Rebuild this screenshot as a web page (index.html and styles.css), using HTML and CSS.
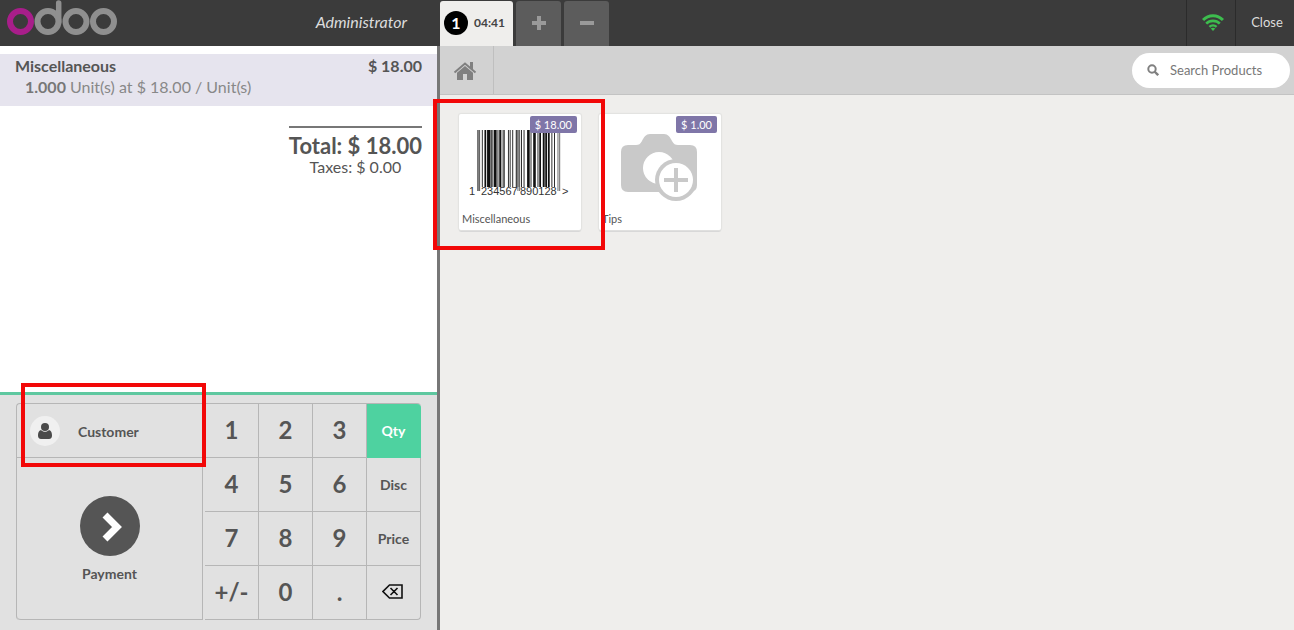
FILE: index.html
```html
<!DOCTYPE html>
<html lang="en">
<head>
<meta charset="utf-8">
<title>Odoo Point of Sale</title>
<link rel="stylesheet" href="styles.css">
</head>
<body>
<div class="pos">
  <header class="topbar">
    <div class="branding">
      <svg class="logo" viewBox="0 0 110 36" role="img" aria-label="odoo" fill="none" stroke-width="6">
        <circle cx="13.500" cy="21.500" r="10.500" stroke="#a81e8a"/>
        <g stroke="#8f8f8f">
          <circle cx="41" cy="21.500" r="10.500"/>
          <path d="M51.700 22V3" stroke-linecap="round" stroke-width="5.500"/>
          <circle cx="69" cy="21.500" r="10.500"/>
          <circle cx="96.500" cy="21.500" r="10.500"/>
        </g>
      </svg>
      <span class="username">Administrator</span>
    </div>
    <nav class="tabs">
      <button class="tab active"><span class="badge">1</span><span>04:41</span></button>
      <button class="tab" aria-label="New order"><svg width="16" height="16" viewBox="0 0 16 16"><path d="M6 0h4v5h5v4h-5v5H6V9H1V5h5z" fill="#9a9a9a"/></svg></button>
      <button class="tab" aria-label="Delete order"><svg width="16" height="16" viewBox="0 0 16 16"><path d="M1 5h14v4H1z" fill="#9a9a9a"/></svg></button>
    </nav>
    <div class="status">
      <button class="status-item wifi" aria-label="Connection status">
        <svg width="22" height="17" viewBox="0 0 22 17" fill="none" stroke="#3dbd4e" stroke-width="3">
          <path d="M1 6C6.500.200 15.500.200 21 6"/>
          <path d="M4.200 9.700C8 5.900 14 5.900 17.800 9.700" stroke-width="2.600"/>
          <path d="M7.400 12.900C9.500 11 12.500 11 14.600 12.900" stroke-width="2.400"/>
          <path d="M11 17l-2.300-2.400q2.300-1.700 4.600 0z" fill="#3dbd4e" stroke="none"/>
        </svg>
      </button>
      <button class="status-item close">Close</button>
    </div>
  </header>

  <div class="content">
    <section class="leftpane">
      <div class="order">
        <div class="orderline">
          <div class="line-main"><span>Miscellaneous</span><span>$ 18.00</span></div>
          <div class="line-info"><b>1.000</b> Unit(s) at $ 18.00 / Unit(s)</div>
        </div>
        <div class="summary">
          <div class="total">Total: $ 18.00</div>
          <div class="taxes">Taxes: $ 0.00</div>
        </div>
      </div>
      <div class="pads">
        <div class="keypad">
          <button class="customer">
            <span class="avatar"><svg width="14" height="16" viewBox="0 0 14 16" fill="#4a4a4a"><circle cx="7" cy="4" r="4"/><path d="M3 7c2 2.400 6 2.400 8 0 2.300.400 3 3 3 5.500 0 2.200-1 3.500-3 3.500H3c-2 0-3-1.300-3-3.500C0 10 .700 7.400 3 7z"/></svg></span>
            <span>Customer</span>
          </button>
          <button class="key">1</button><button class="key">2</button><button class="key">3</button><button class="mode selected">Qty</button>
          <button class="payment">
            <span class="pay-circle"><svg width="20" height="30" viewBox="0 0 20 30"><path d="M3 3l12 12L3 27" fill="none" stroke="#fff" stroke-width="7"/></svg></span>
            <span>Payment</span>
          </button>
          <button class="key">4</button><button class="key">5</button><button class="key">6</button><button class="mode">Disc</button>
          <button class="key">7</button><button class="key">8</button><button class="key">9</button><button class="mode">Price</button>
          <button class="key">+/-</button><button class="key">0</button><button class="key">.</button>
          <button class="mode last" aria-label="Backspace"><svg width="21" height="15" viewBox="0 0 21 15" fill="none" stroke="#111" stroke-width="1.600"><path d="M7.500 1H20v13H7.500L1 7.500zM8.500 4l7 7M15.500 4l-7 7"/></svg></button>
        </div>
      </div>
    </section>

    <section class="rightpane">
      <div class="catbar">
        <button class="home" aria-label="Home"><svg width="24" height="20" viewBox="0 0 24 20" fill="#808080"><path d="M12 6l8 6.800V20h-6v-6h-4v6H4v-7.200z"/><path d="M1.500 12.500L12 3.500l10.500 9" fill="none" stroke="#808080" stroke-width="2"/><path d="M17 2h3v8l-3-2.500z"/></svg></button>
        <label class="search">
          <svg width="12" height="12" viewBox="0 0 12 12" fill="none" stroke="#808080" stroke-width="2"><circle cx="5" cy="5" r="3.700"/><path d="M7.500 7.500L11.200 11.200" stroke-width="2.400"/></svg>
          <input type="text" placeholder="Search Products" aria-label="Search Products">
        </label>
      </div>
      <div class="products">
        <article class="product">
          <svg class="picture" viewBox="0 0 122 90" role="img" aria-label="Barcode">
            <path d="M18 16h3v61h-3z" fill="#999"/>
            <path d="M32 16h3v57h-3zM42 16h4v57h-4zM57 16h4v57h-4zM84 16h3v57h-3z" fill="#aaa"/>
            <g transform="translate(18.500 16) scale(.870 1)" fill="#111">
              <path d="M0 0h1v61H0zM2 0h1v61H2zM46 0h1v61h-1zM48 0h1v61h-1zM92 0h1v61h-1zM94 0h1v61h-1z" fill="#555"/>
              <path d="M5 0h1v57H5zM8 0h2v57H8zM11 0h4v57h-4zM16 0h1v57h-1zM19 0h3v57h-3zM23 0h1v57h-1zM25 0h2v57h-2zM30 0h1v57h-1zM35 0h1v57h-1zM37 0h1v57h-1zM40 0h1v57h-1zM44 0h1v57h-1zM50 0h1v57h-1zM53 0h1v57h-1zM57 0h3v57h-3zM61 0h1v57h-1zM64 0h3v57h-3zM69 0h1v57h-1zM71 0h2v57h-2zM75 0h2v57h-2zM78 0h2v57h-2zM81 0h2v57h-2zM85 0h1v57h-1zM88 0h1v57h-1z"/>
            </g>
            <g class="digits"><text x="10" y="81">1</text><text x="22" y="81">234567</text><text x="61" y="81">890128</text><text x="103" y="81">&gt;</text></g>
          </svg>
          <span class="price">$ 18.00</span>
          <span class="name">Miscellaneous</span>
        </article>
        <article class="product">
          <svg class="picture" viewBox="0 0 122 90" role="img" aria-label="No picture">
            <path d="M29 31h8c3 0 4-1 6-4 2-4 4-7 8-7h14c4 0 6 3 8 7 2 3 3 4 6 4h12q7 0 7 7v33q0 7-7 7H29q-7 0-7-7V38q0-7 7-7z" fill="#c9c9c9"/>
            <circle cx="60" cy="54" r="16" fill="#fff"/>
            <circle cx="77" cy="66" r="21" fill="#c9c9c9"/>
            <circle cx="77" cy="66" r="17" fill="#fff"/>
            <path d="M65 66h24M77 54v24" stroke="#c9c9c9" stroke-width="4"/>
          </svg>
          <span class="price">$ 1.00</span>
          <span class="name">Tips</span>
        </article>
      </div>
    </section>
  </div>
  <div class="highlight highlight-product"></div>
  <div class="highlight highlight-customer"></div>
</div>
</body>
</html>
```
FILE: styles.css
```css
* { box-sizing: border-box; }
body { margin: 0; font-family: Lato, "Liberation Sans", sans-serif; color: #555; }
button { margin: 0; padding: 0; border: 0; background: none; font: inherit; color: inherit; cursor: pointer; }
svg { display: block; flex: none; }

.pos { position: relative; display: flex; flex-direction: column; height: 100vh; overflow: hidden; background: #efeeec; }

.topbar { display: flex; flex: none; height: 46px; background: #3b3b3b; color: #ddd; }
.branding { display: flex; flex: 0 0 440px; align-items: flex-start; justify-content: space-between; padding: 0 33px 0 7px; }
.logo { width: 110px; height: 36px; }
.username { font-size: 16px; font-style: italic; line-height: 44px; }
.tabs { display: flex; flex: 1; gap: 3px; padding-top: 1px; }
.tab { display: flex; align-items: center; justify-content: center; width: 45px; border-radius: 3px 3px 0 0; background: #5c5c5c; }
.tab.active { justify-content: flex-start; width: 73px; gap: 6px; padding: 0 0 2px 4px; background: #efeeec; color: #444; font-size: 12px; font-weight: 700; }
.badge { width: 24px; height: 24px; border-radius: 50%; background: #000; color: #fff; font-size: 16px; line-height: 24px; }
.status { display: flex; }
.status-item { display: flex; align-items: center; justify-content: center; border-left: 1px solid #2b2b2b; font-size: 13px; }
.wifi { width: 49px; padding: 0 0 2px 4px; }
.close { width: 59px; padding: 0 0 2px 4px; }

.content { display: flex; flex: 1; min-height: 0; }
.leftpane { display: flex; flex: 0 0 440px; flex-direction: column; border-right: 3px solid #777; background: #fff; }
.order { flex: 1; padding-top: 8px; }
.orderline { padding: 1px 15px; height: 52px; background: #e6e4ee; font-size: 16px; line-height: 21px; }
.line-main { display: flex; justify-content: space-between; font-weight: 700; }
.line-info { padding-left: 10px; color: #888; }
.line-info b { color: #777; }
.summary { width: fit-content; margin: 20px 15px 0 auto; padding-top: 6px; border-top: 2px solid #777; text-align: center; }
.total { font-size: 22px; font-weight: 700; line-height: 24px; }
.taxes { font-size: 16px; line-height: 18px; }

.pads { padding: 8px 16px 10px; border-top: 3px solid #5ec8a0; background: #e1e1e1; }
.keypad { display: grid; grid-template-columns: 188px repeat(4, 54px); grid-auto-rows: 54px; width: fit-content; border: solid #b6b6b6; border-width: 1px 0 0 1px; border-radius: 4px; }
.keypad button { border: solid #b6b6b6; border-width: 0 1px 1px 0; font-weight: 700; }
.keypad .customer { display: flex; align-items: center; gap: 18px; padding: 1px 0 0 13px; border-right: 0; font-size: 14px; }
.avatar { display: flex; align-items: center; justify-content: center; width: 30px; height: 30px; border-radius: 50%; background: #f0f0f0; }
.keypad .payment { display: flex; grid-row: 2 / 5; grid-column: 1; flex-direction: column; align-items: center; justify-content: center; gap: 9px; margin-right: 2px; padding-top: 2px; border-bottom-left-radius: 4px; font-size: 14px; line-height: 18px; }
.pay-circle { display: flex; align-items: center; justify-content: center; width: 60px; height: 60px; padding: 2px 0 0 4px; border-radius: 50%; background: #555; }
.keypad .key { padding-bottom: 2px; font-size: 24px; }
.mode { display: flex; align-items: center; justify-content: center; font-size: 14px; }
.keypad .mode.selected { border-color: #4ed2a0; border-top-right-radius: 4px; background: #4ed2a0; color: #fff; }
.keypad .last { padding: 0 2px 2px 0; border-bottom-right-radius: 4px; }

.rightpane { flex: 1; min-width: 0; }
.catbar { display: flex; align-items: center; justify-content: space-between; height: 49px; padding-right: 4px; border-bottom: 1px solid #c3c3c3; background: #d2d2d2; }
.home { display: flex; align-items: center; justify-content: center; align-self: stretch; width: 54px; padding-right: 3px; border-right: 1px solid #bfbfbf; }
.search { display: flex; align-items: center; gap: 11px; width: 158px; height: 35px; padding: 0 15px; border-radius: 18px; background: #fff; }
.search input { flex: 1; min-width: 0; padding: 0; border: 0; outline: 0; background: none; color: #666; font: 13px Lato, "Liberation Sans", sans-serif; }
.search input::placeholder { color: #777; opacity: 1; }

.products { display: flex; flex-wrap: wrap; gap: 18px; padding: 19px; }
.product { position: relative; display: flex; flex-direction: column; justify-content: space-between; width: 122px; height: 116px; border-radius: 2px; background: #fff; box-shadow: 0 0 1px 1px #e2e2e0, 0 2px 0 #d8d8d8; }
.picture { width: 122px; height: 90px; }
.digits { font: 11px "Liberation Sans", sans-serif; fill: #333; }
.price { position: absolute; top: 2px; right: 4px; padding: 0 5px; border-radius: 2px; background: #7f76a8; color: #fff; font-size: 11px; line-height: 17px; }
.name { padding: 0 3px 3px; font-size: 11px; line-height: 16px; }

.highlight { position: absolute; border: 4px solid #f20808; pointer-events: none; }
.highlight-product { left: 433px; top: 99px; width: 172px; height: 151px; }
.highlight-customer { left: 21px; top: 383px; width: 185px; height: 84px; }
```
